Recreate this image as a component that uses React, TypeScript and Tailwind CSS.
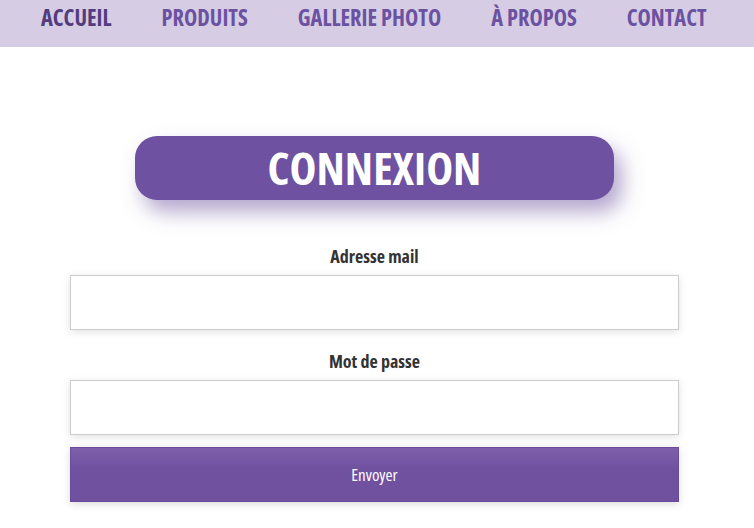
import React from 'react';

const NAV = ['ACCUEIL', 'PRODUITS', 'GALLERIE PHOTO', 'À PROPOS', 'CONTACT'];

const font = { fontFamily: '"Open Sans", "Liberation Sans", sans-serif', fontStretch: '75%' } as React.CSSProperties;

export default function App() {
  return (
    <div className="min-h-[528px] bg-white" style={font}>
      <nav className="h-[47px] bg-[#d6cce4] flex items-start pl-[41px] gap-[50px] pt-[3px]">
        {NAV.map((n, i) => (
          <a
            key={n}
            className={`text-[22.4px] font-bold leading-[30px] ${i === 0 ? 'text-[#523b7e]' : 'text-[#6b52a1]'}`}
          >
            {n}
          </a>
        ))}
      </nav>
      <main className="ml-[70px] w-[609px] pt-[89px] flex flex-col items-center">
        <div className="w-[479px] h-[64px] rounded-[22px] bg-[#6e51a0] shadow-[8px_12px_20px_rgba(110,81,160,0.5)] flex items-center justify-center">
          <h1 className="text-white text-[45.5px] font-bold leading-none">CONNEXION</h1>
        </div>
        <form className="w-full mt-[45px] flex flex-col">
          <label className="text-center text-[18px] font-bold text-[#333] leading-[22px]">Adresse mail</label>
          <input className="mt-[8px] h-[55px] w-full bg-white border border-[#ccc] shadow-[0_2px_8px_rgba(0,0,0,0.12)]" />
          <label className="mt-[20px] text-center text-[18px] font-bold text-[#333] leading-[22px]">Mot de passe</label>
          <input className="mt-[8px] h-[55px] w-full bg-white border border-[#ccc] shadow-[0_2px_8px_rgba(0,0,0,0.12)]" />
          <button
            type="button"
            className="mt-[12px] h-[55px] w-full border border-[#6a4c9c] bg-[linear-gradient(#7d5fab,#6f51a0_40%)] text-white text-[17px] font-normal shadow-[0_2px_8px_rgba(0,0,0,0.15)]"
          >
            Envoyer
          </button>
        </form>
      </main>
    </div>
  );
}
